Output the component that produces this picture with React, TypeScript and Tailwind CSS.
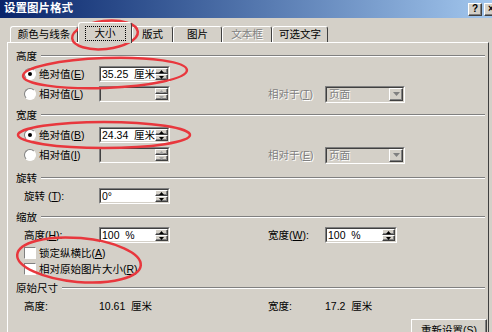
import React from "react";

const sunkenOuter = "border border-t-[#808080] border-l-[#808080] border-b-white border-r-white";
const sunkenInner = "border border-t-[#404040] border-l-[#404040] border-b-[#d4d0c8] border-r-[#d4d0c8]";
const raised =
    "border border-t-white border-l-white border-b-[#404040] border-r-[#404040] shadow-[inset_-1px_-1px_0_#808080]";
const greyText = "text-[#808080] [text-shadow:1px_1px_0_#ffffff]";

function Key({ k }: { k: string }) {
    return (
        <>
            (<span className="underline">{k}</span>)
        </>
    );
}

function Arrow({ up, color = "#000", w = 5 }: { up?: boolean; color?: string; w?: number }) {
    const h = Math.ceil(w / 2);
    return (
        <svg width={w} height={h} viewBox={`0 0 ${w} ${h}`}>
            <path d={up ? `M${w / 2} 0L${w} ${h}H0Z` : `M0 0H${w}L${w / 2} ${h}Z`} fill={color} />
        </svg>
    );
}

function SpinInput({ value, disabled, w = "w-[71px]" }: { value?: string; disabled?: boolean; w?: string }) {
    return (
        <div className={`flex h-[16px] ${w} ${sunkenOuter}`}>
            <div className={`flex flex-1 items-center ${sunkenInner} ${disabled ? "bg-[#d4d0c8]" : "bg-white"}`}>
                <span className="whitespace-pre pl-[1px]">{value}</span>
                <div className="ml-auto flex h-full w-[13px] flex-col">
                    <div className={`flex flex-1 items-center justify-center bg-[#d4d0c8] ${raised}`}>
                        <Arrow up color={disabled ? "#a0a0a0" : "#000"} />
                    </div>
                    <div className={`flex flex-1 items-center justify-center bg-[#d4d0c8] ${raised}`}>
                        <Arrow color={disabled ? "#a0a0a0" : "#000"} />
                    </div>
                </div>
            </div>
        </div>
    );
}

function Combo({ value }: { value: string }) {
    return (
        <div className={`flex h-[17px] w-[80px] ${sunkenOuter}`}>
            <div className={`flex flex-1 items-center bg-[#d4d0c8] ${sunkenInner}`}>
                <span className={`pl-[2px] ${greyText}`}>{value}</span>
                <div className={`ml-auto flex h-full w-[14px] items-center justify-center bg-[#d4d0c8] ${raised}`}>
                    <Arrow color="#808080" w={7} />
                </div>
            </div>
        </div>
    );
}

function Radio({ checked }: { checked?: boolean }) {
    return (
        <div
            className={`flex h-[12px] w-[12px] items-center justify-center rounded-full bg-white ${sunkenOuter}`}
        >
            {checked && <div className="h-[4px] w-[4px] rounded-full bg-black" />}
        </div>
    );
}

function Check() {
    return <div className={`h-[12px] w-[12px] bg-white ${sunkenOuter}`} />;
}

function SectionHead({ label, className = "" }: { label: string; className?: string }) {
    return (
        <div className={`flex h-[20px] items-center pl-[8px] pr-[3px] ${className}`}>
            <span>{label}</span>
            <div className="ml-[4px] flex-1 border-b border-t border-b-white border-t-[#808080]" />
        </div>
    );
}

function Tab({
    label,
    w,
    selected,
    disabled,
}: {
    label: string;
    w: string;
    selected?: boolean;
    disabled?: boolean;
}) {
    return (
        <div
            className={`${w} flex items-center justify-center rounded-t-[3px] border-l border-r border-t border-l-white border-r-[#404040] border-t-white bg-[#d4d0c8] ${
                selected ? "relative z-10 mb-[-1px] h-[21px]" : "h-[16px]"
            }`}
        >
            {selected ? (
                <span className="border border-dotted border-black px-[9px] leading-[13px]">{label}</span>
            ) : (
                <span className={disabled ? greyText : ""}>{label}</span>
            )}
        </div>
    );
}

export default function App() {
    return (
        <div className="relative h-[332px] w-[492px] overflow-hidden bg-[#d4d0c8] font-['Liberation_Sans','Noto_Sans_CJK_SC',sans-serif] text-[10.5px] leading-none text-black">
            {/* title bar */}
            <div className="flex h-[18px] w-[500px] items-center bg-gradient-to-r from-[#0a246a] to-[#a6caf0] pl-[4px]">
                <span className="text-[11.5px] font-bold text-white">设置图片格式</span>
                <div className="ml-auto flex gap-[2px] pr-[2px]">
                    <div className={`flex h-[13px] w-[14px] items-center justify-center bg-[#d4d0c8] text-[10px] font-bold ${raised}`}>
                        ?
                    </div>
                    <div className={`flex h-[13px] w-[14px] items-center justify-center bg-[#d4d0c8] text-[10px] font-bold ${raised}`}>
                        ×
                    </div>
                </div>
            </div>

            {/* tabs */}
            <div className="flex h-[24px] items-end pl-[10px]">
                <Tab label="颜色与线条" w="w-[68px]" />
                <Tab label="大小" w="w-[54px]" selected />
                <Tab label="版式" w="w-[41px]" />
                <Tab label="图片" w="w-[49px]" />
                <Tab label="文本框" w="w-[50px]" disabled />
                <Tab label="可选文字" w="w-[56px]" />
            </div>

            {/* panel */}
            <div className="ml-[7px] h-[300px] w-[482px] border-l border-r border-t border-l-white border-r-[#404040] border-t-white pt-[3px]">
                <SectionHead label="高度" />
                <div className="flex h-[16px] items-center pl-[16px]">
                    <Radio checked />
                    <span className="ml-[3px] w-[60px]">
                        绝对值<Key k="E" />
                    </span>
                    <SpinInput value="35.25  厘米" />
                </div>
                <div className="mt-[4px] flex h-[16px] items-center pl-[16px]">
                    <Radio />
                    <span className="ml-[3px] w-[60px]">
                        相对值<Key k="L" />
                    </span>
                    <SpinInput disabled />
                    <span className={`ml-[98px] w-[57px] ${greyText}`}>
                        相对于<Key k="T" />
                    </span>
                    <Combo value="页面" />
                </div>

                <SectionHead label="宽度" className="mt-[3px]" />
                <div className="mt-[2px] flex h-[16px] items-center pl-[16px]">
                    <Radio checked />
                    <span className="ml-[3px] w-[60px]">
                        绝对值<Key k="B" />
                    </span>
                    <SpinInput value="24.34  厘米" />
                </div>
                <div className="mt-[4px] flex h-[16px] items-center pl-[16px]">
                    <Radio />
                    <span className="ml-[3px] w-[60px]">
                        相对值<Key k="I" />
                    </span>
                    <SpinInput disabled />
                    <span className={`ml-[98px] w-[57px] ${greyText}`}>
                        相对于<Key k="E" />
                    </span>
                    <Combo value="页面" />
                </div>

                <SectionHead label="旋转" className="mt-[5px]" />
                <div className="flex h-[16px] items-center pl-[16px]">
                    <span className="w-[75px]">
                        旋转 <Key k="T" />:
                    </span>
                    <SpinInput value="0°" />
                </div>

                <SectionHead label="缩放" className="mt-[3px]" />
                <div className="flex h-[16px] items-center pl-[16px]">
                    <span className="w-[75px]">
                        高度<Key k="H" />:
                    </span>
                    <SpinInput value="100  %" />
                    <span className="ml-[98px] w-[57px]">
                        宽度<Key k="W" />:
                    </span>
                    <SpinInput value="100  %" w="w-[72px]" />
                </div>
                <div className="mt-[3px] flex h-[14px] items-center pl-[16px]">
                    <Check />
                    <span className="ml-[3px]">
                        锁定纵横比<Key k="A" />
                    </span>
                </div>
                <div className="mt-[2px] flex h-[14px] items-center pl-[16px]">
                    <Check />
                    <span className="ml-[3px]">
                        相对原始图片大小<Key k="R" />
                    </span>
                </div>

                <SectionHead label="原始尺寸" className="mt-[2px] h-[18px]" />
                <div className="flex h-[16px] items-center pl-[16px]">
                    <span className="w-[75px]">高度:</span>
                    <span className="w-[169px] whitespace-pre">10.61  厘米</span>
                    <span className="w-[57px]">宽度:</span>
                    <span className="whitespace-pre">17.2  厘米</span>
                </div>
                <div className="mt-[5px] flex justify-end pr-[1px]">
                    <div className={`flex h-[22px] w-[76px] items-center justify-center bg-[#d4d0c8] ${raised}`}>
                        重新设置<Key k="S" />
                    </div>
                </div>
            </div>

            {/* hand-drawn red marks */}
            <svg className="pointer-events-none absolute inset-0" width="492" height="332" viewBox="0 0 492 332">
                <g fill="none" stroke="#e8373d" strokeWidth="2.5">
                    <ellipse cx="105" cy="35" rx="33" ry="14" transform="rotate(-6 105 35)" />
                    <ellipse cx="105" cy="73" rx="82" ry="15" transform="rotate(-2 105 73)" />
                    <ellipse cx="104" cy="135" rx="86" ry="13" />
                    <ellipse cx="79" cy="260" rx="62" ry="22" transform="rotate(5 79 260)" />
                </g>
            </svg>
        </div>
    );
}
